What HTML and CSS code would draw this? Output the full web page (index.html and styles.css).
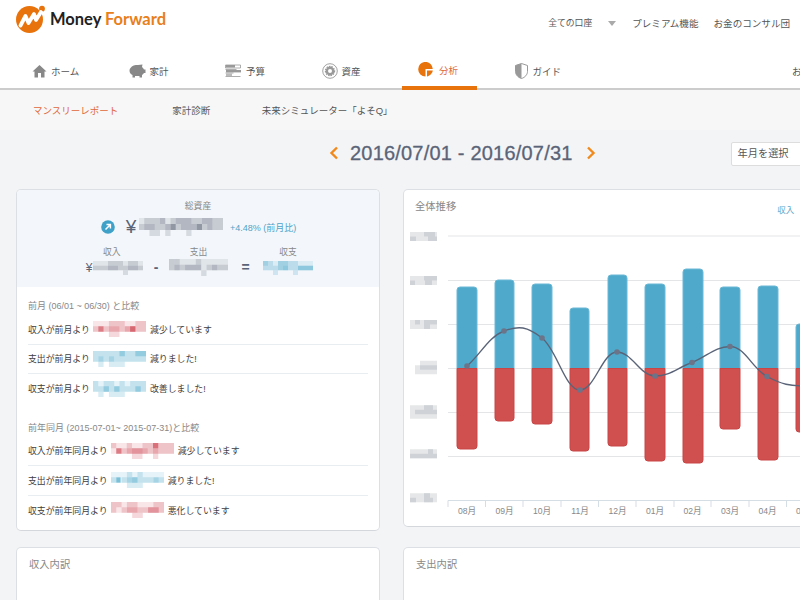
FILE: index.html
```html
<!DOCTYPE html>
<html lang="ja">
<head>
<meta charset="utf-8">
<title>Money Forward</title>
<link rel="stylesheet" href="styles.css">
</head>
<body>
<div class="page">
  <header class="top">
    <div class="logo">
      <svg class="logo-mark" width="32" height="30" viewBox="0 0 32 30">
        <circle cx="14.500" cy="15.500" r="13.500" fill="#e8730c"/>
        <circle cx="27" cy="4.700" r="2.900" fill="#e8730c"/>
        <path d="M5.500 21.500 L10.500 12 L13.500 19 L19 10 L21 16 L26 8" fill="none" stroke="#fff" stroke-width="3.800" stroke-linejoin="round" stroke-linecap="round"/>
      </svg>
      <span class="logo-text">Money <em>Forward</em></span>
    </div>
    <div class="top-links">
      <a class="account">全ての口座</a>
      <span class="tri"></span>
      <a class="premium">プレミアム機能</a>
      <a>お金のコンサル団</a>
    </div>
  </header>

  <nav class="nav">
    <a class="nav-item">
      <svg width="15" height="14" viewBox="0 0 15 14"><path d="M7.500 1 L0.500 7.500 H2.500 V13.500 H6 V9 H9 V13.500 H12.500 V7.500 H14.500 Z" fill="#888"/></svg>ホーム
    </a>
    <a class="nav-item">
      <svg width="17" height="14" viewBox="0 0 17 14"><path d="M1.500 4 C3 1.500 6 1 9 1 C10.500 1 12 .5 13.500 .5 L13 3 C14 3.800 14.600 4.600 15 5.500 H16.500 V9 H15 C14.400 10 13.600 10.700 13 11 V13.500 H10.500 V12 H6 V13.500 H3.500 V11 C1.500 10 .5 8.500 .5 6.500 C.5 5.500 .9 4.600 1.500 4 Z" fill="#888"/></svg>家計
    </a>
    <a class="nav-item">
      <svg width="17" height="14" viewBox="0 0 17 14"><path d="M.5 1h15v3H.5zM.5 5.500h11M.5 9h8M.5 12.500h15" fill="none" stroke="#999" stroke-width=".8"/><path d="M1 6h15v2.400H1z" fill="#999"/><path d="M1 9.500h6v2.500H1z" fill="#bbb"/><path d="M1 1h9v2.500H1z" fill="#999"/></svg>予算
    </a>
    <a class="nav-item">
      <svg width="16" height="16" viewBox="0 0 16 16"><circle cx="8" cy="8" r="7.300" fill="none" stroke="#999" stroke-width=".9"/><circle cx="8" cy="8" r="3.200" fill="none" stroke="#999" stroke-width="2.400"/><circle cx="8" cy="8" r="4.600" fill="none" stroke="#999" stroke-width="1.200" stroke-dasharray="1.500 1"/></svg>資産
    </a>
    <a class="nav-item active">
      <svg width="16" height="15" viewBox="0 0 16 15"><path d="M14.800 7 A7.300 7.300 0 1 0 7.500 14.500 V7 Z" fill="#e8730c"/><path d="M9 8.500 H14.800 C14.500 11 12 13.800 9 14.500 Z" fill="#e8730c"/></svg>分析
    </a>
    <a class="nav-item guide">
      <svg width="13" height="16" viewBox="0 0 13 16"><path d="M6.500 .5 L12.500 2.500 V8.500 C12.500 11.500 10 14.500 6.500 15.500 C3 14.500 .5 11.500 .5 8.500 V2.500 Z" fill="#fff" stroke="#999"/><path d="M6.500 .5 L.5 2.500 V8.500 C.5 11.500 3 14.500 6.500 15.500 Z" fill="#999"/></svg>ガイド
    </a>
    <a class="nav-item nav-clip">お知らせ</a>
  </nav>

  <div class="subnav">
    <a class="sub-active">マンスリーレポート</a>
    <a>家計診断</a>
    <a>未来シミュレーター「よそQ」</a>
  </div>

  <main class="main">
    <div class="date-row">
      <svg class="chev" width="10" height="14" viewBox="0 0 10 14"><path d="M8 1.500 L2.500 7 L8 12.500" fill="none" stroke="#f08a1d" stroke-width="2.400"/></svg>
      <h1 class="date">2016/07/01 - 2016/07/31</h1>
      <svg class="chev" width="10" height="14" viewBox="0 0 10 14"><path d="M2 1.500 L7.500 7 L2 12.500" fill="none" stroke="#f08a1d" stroke-width="2.400"/></svg>
      <div class="picker">年月を選択</div>
    </div>

    <div class="grid">
      <section class="card card-summary">
        <div class="summary">
          <div class="s-label">総資産</div>
          <div class="total">
            <svg class="arrow" width="14" height="14" viewBox="0 0 14 14"><circle cx="7" cy="7" r="6.800" fill="#3fa0c8"/><path d="M4.500 9.500 L9 5 M5.500 4.600 H9.400 V8.500" fill="none" stroke="#fff" stroke-width="1.500"/></svg>
            <span class="yen-big">¥</span>
            <svg class="mz mz-total" width="84" height="18" viewBox="0 0 16 3" preserveAspectRatio="none">
              <path class="gray m0" d="M0 .5h16M0 1.500h16"/>
              <path class="gray m1" d="M1 .5h3M6 .5h1M10 .5h2M14 .5h2M0 1.500h1M3 1.500h2M7 1.500h1M12 1.500h1M14 1.500h2"/>
              <path class="gray m2" d="M1 1.500h2M5 1.500h1M8 1.500h3M13 1.500h1M4 .5h1M7 .5h3M12 .5h2"/>
              <path class="gray m1" d="M2 2.500h2M5 2.500h1M9 2.500h1"/>
              <path class="gray m3" d="M6 1.500h1M11 1.500h1"/>
            </svg>
            <span class="rate">+4.48% (前月比)</span>
          </div>
          <div class="calc">
            <div class="s-label s-first">収入</div><div></div><div class="s-label">支出</div><div></div><div class="s-label">収支</div>
            <div class="calc-val"><span class="yen-small">¥</span>
              <svg class="mz" width="50" height="14" viewBox="0 0 10 3" preserveAspectRatio="none">
                <path class="gray m0" d="M0 .5h10M0 1.500h10"/>
                <path class="gray m1" d="M0 1.500h3M5 1.500h2M9 1.500h1M3 .5h3M7 .5h2"/>
                <path class="gray m2" d="M3 1.500h2M7 1.500h2"/>
                <path class="gray m1" d="M6 2.500h1"/>
              </svg>
            </div>
            <div class="op">-</div>
            <svg class="mz" width="59" height="17" viewBox="0 0 11 3" preserveAspectRatio="none">
              <path class="gray m0" d="M0 .5h11M0 1.500h11"/>
              <path class="gray m1" d="M0 .5h1M0 1.500h1M2 1.500h1M5 .5h1M9 1.500h2M7 1.500h1"/>
              <path class="gray m2" d="M1 1.500h1M3 1.500h3M8 1.500h1"/>
              <path class="gray m1" d="M6 2.500h1M1 .5h1"/>
            </svg>
            <div class="op">=</div>
            <svg class="mz" width="50" height="14" viewBox="0 0 10 3" preserveAspectRatio="none">
              <path class="blue m0" d="M0 .5h10M0 1.500h10"/>
              <path class="blue m1" d="M0 1.500h3M4 1.500h6M1 .5h1M5 .5h2"/>
              <path class="blue m2" d="M0 .5h1M3 1.500h2M3 .5h2M7 1.500h3"/>
              <path class="blue m1" d="M2 2.500h1M6 2.500h1"/>
            </svg>
          </div>
        </div>

        <div class="compare">
          <h3 class="c-title">前月 (06/01 ~ 06/30) と比較</h3>
          <ul class="c-list">
            <li>収入が前月より
              <svg class="mz" width="53" height="16" viewBox="0 0 10 3" preserveAspectRatio="none">
                <path class="red m0" d="M0 .5h10M0 1.500h10"/>
                <path class="red m1" d="M8 .5h2M3 .5h3M0 1.500h1M2 1.500h1M3 2.500h2M5 1.500h1M8 1.500h2"/>
                <path class="red m2" d="M3 1.500h2M6 1.500h2"/>
                <path class="red m3" d="M1 1.500h1M7 1.500h1"/>
              </svg>
              減少しています</li>
            <li>支出が前月より
              <svg class="mz" width="53" height="16" viewBox="0 0 10 3" preserveAspectRatio="none">
                <path class="blue m0" d="M0 .5h10M0 1.500h10"/>
                <path class="blue m1" d="M0 .5h10M0 1.500h1M2 1.500h1M4 1.500h2M6 1.500h4M1 2.500h1M3 2.500h3"/>
                <path class="blue m2" d="M1 1.500h1M3 1.500h1M5 .5h1M8 .5h2"/>
              </svg>
              減りました!</li>
            <li>収支が前月より
              <svg class="mz" width="53" height="16" viewBox="0 0 10 3" preserveAspectRatio="none">
                <path class="blue m0" d="M0 .5h10M0 1.500h10"/>
                <path class="blue m1" d="M0 .5h1M2 .5h2M5 .5h1M7 .5h3M0 1.500h10M1 2.500h1M3 2.500h3"/>
                <path class="blue m2" d="M2 1.500h1M4 1.500h1M8 1.500h1"/>
              </svg>
              改善しました!</li>
          </ul>

          <h3 class="c-title c-second">前年同月 (2015-07-01~ 2015-07-31)と比較</h3>
          <ul class="c-list">
            <li>収入が前年同月より
              <svg class="mz" width="63" height="16" viewBox="0 0 12 3" preserveAspectRatio="none">
                <path class="red m0" d="M0 .5h12M0 1.500h12"/>
                <path class="red m1" d="M0 .5h1M3 .5h1M6 .5h3M2 1.500h1M4 1.500h2M7 1.500h1M9 1.500h3M9 .5h3M4 2.500h2M8 2.500h1"/>
                <path class="red m2" d="M3 1.500h2M5 1.500h2M8 1.500h1"/>
                <path class="red m3" d="M1 1.500h1M8 .5h1"/>
              </svg>
              減少しています</li>
            <li>支出が前年同月より
              <svg class="mz mz-narrow" width="53" height="16" viewBox="0 0 10 3" preserveAspectRatio="none">
                <path class="blue m0" d="M0 .5h10M0 1.500h10"/>
                <path class="blue m1" d="M0 1.500h1M2 1.500h1M3 .5h1M4 1.500h4M5 .5h1M9 1.500h1M3 2.500h3"/>
                <path class="blue m2" d="M3 1.500h2M8 1.500h1"/>
                <path class="blue m3" d="M1 1.500h.8"/>
              </svg>
              減りました!</li>
            <li>収支が前年同月より
              <svg class="mz mz-narrow" width="53" height="16" viewBox="0 0 10 3" preserveAspectRatio="none">
                <path class="red m0" d="M0 .5h10M0 1.500h10"/>
                <path class="red m1" d="M0 .5h2M3 .5h2M0 1.500h1M2 1.500h1M5 1.500h1M6 1.500h4M4 2.500h2M8 .5h2"/>
                <path class="red m2" d="M3 1.500h2M7 1.500h2"/>
              </svg>
              悪化しています</li>
          </ul>
        </div>
      </section>

      <section class="card card-chart">
        <div class="chart-head">
          <h2 class="card-title">全体推移</h2>
          <span class="legend">収入</span>
        </div>
        <svg class="chart" width="397" height="296" viewBox="404 226 397 296">
          <path class="gridlines" d="M448 236H800M448 280.500H800M448 324.500H800M448 368.500H800M448 412.500H800M448 456.500H800"/>
          <g class="axis-mz">
            <path class="base" d="M410 234.200h27M410 238.700h27"/>
            <path class="cells" d="M410 238.700h6M424 234.200h11M428 238.700h9"/>
            <path class="base" d="M410 278.200h27M410 282.700h27"/>
            <path class="cells" d="M424 278.200h13M410 282.700h5M425 282.700h7"/>
            <path class="base" d="M410 322.200h27M410 326.700h27"/>
            <path class="cells" d="M415 322.200h5M424 322.200h13M424 326.700h6"/>
            <path class="base" d="M420 363h17M415 367.500h22M415 372h22"/>
            <path class="cells" d="M420 367.500h17"/>
            <path class="base" d="M410 407.500h27M410 412h27M410 416.500h27"/>
            <path class="cells" d="M424 407.500h9M415 412h22"/>
            <path class="base" d="M410 451.500h27M410 456h27"/>
            <path class="cells" d="M410 456h27M428 451.500h5"/>
            <path class="base" d="M410 495.500h27M410 500h27"/>
            <path class="cells" d="M424 495.500h6M410 500h6M424 500h9"/>
          </g>
          <g class="bars-blue">
            <path d="M457 368.500V290q0-3 3-3h14q3 0 3 3V368.500z"/>
            <path d="M495 368.500V283q0-3 3-3h13q3 0 3 3V368.500z"/>
            <path d="M532 368.500V287q0-3 3-3h14q3 0 3 3V368.500z"/>
            <path d="M570 368.500V311q0-3 3-3h13q3 0 3 3V368.500z"/>
            <path d="M608 368.500V278q0-3 3-3h13q3 0 3 3V368.500z"/>
            <path d="M645 368.500V287q0-3 3-3h14q3 0 3 3V368.500z"/>
            <path d="M683 368.500V272q0-3 3-3h14q3 0 3 3V368.500z"/>
            <path d="M720 368.500V290q0-3 3-3h14q3 0 3 3V368.500z"/>
            <path d="M758 368.500V289q0-3 3-3h14q3 0 3 3V368.500z"/>
            <path d="M796 368.500V327q0-3 3-3h14q3 0 3 3V368.500z"/>
          </g>
          <g class="bars-red">
            <path d="M457 368.500V446q0 3 3 3h14q3 0 3-3V368.500z"/>
            <path d="M495 368.500V418q0 3 3 3h13q3 0 3-3V368.500z"/>
            <path d="M532 368.500V421q0 3 3 3h14q3 0 3-3V368.500z"/>
            <path d="M570 368.500V448q0 3 3 3h13q3 0 3-3V368.500z"/>
            <path d="M608 368.500V443q0 3 3 3h13q3 0 3-3V368.500z"/>
            <path d="M645 368.500V458q0 3 3 3h14q3 0 3-3V368.500z"/>
            <path d="M683 368.500V460q0 3 3 3h14q3 0 3-3V368.500z"/>
            <path d="M720 368.500V426q0 3 3 3h14q3 0 3-3V368.500z"/>
            <path d="M758 368.500V457q0 3 3 3h14q3 0 3-3V368.500z"/>
            <path d="M796 368.500V429q0 3 3 3h14q3 0 3-3V368.500z"/>
          </g>
          <path class="trend" d="M467 366C480 355 489 336.600 504 331C519 325.400 527 326.400 542 338C557 349.600 565 390 580 390C595 390 602 352 617 352C632 352 640 376 655 376C670 376 677 368 692 362.500C707 356.600 715 346.500 730 346.500C745 346.500 752 368.500 767 376.500C782 384.500 790 386 805 386"/>
          <g class="dots">
            <circle cx="467" cy="366" r="2.800"/><circle cx="504" cy="331" r="2.800"/><circle cx="542" cy="338" r="2.800"/><circle cx="580" cy="390" r="2.800"/><circle cx="617" cy="352" r="2.800"/><circle cx="655" cy="376" r="2.800"/><circle cx="692" cy="362.500" r="2.800"/><circle cx="730" cy="346.500" r="2.800"/><circle cx="767" cy="376.500" r="2.800"/>
          </g>
          <path class="axis" d="M448 507V500.500H800M485.500 500.500V507M523 500.500V507M561 500.500V507M598.500 500.500V507M636 500.500V507M674 500.500V507M711 500.500V507M749 500.500V507M786.500 500.500V507"/>
          <g class="ticks">
            <text x="467" y="513.500">08月</text><text x="504.500" y="513.500">09月</text><text x="542" y="513.500">10月</text><text x="580" y="513.500">11月</text><text x="617.500" y="513.500">12月</text><text x="655" y="513.500">01月</text><text x="692.500" y="513.500">02月</text><text x="730" y="513.500">03月</text><text x="767.500" y="513.500">04月</text><text x="805" y="513.500">05月</text>
          </g>
        </svg>
      </section>

      <section class="card card-low"><h2 class="card-title">収入内訳</h2></section>
      <section class="card card-low"><h2 class="card-title">支出内訳</h2></section>
    </div>
  </main>
</div>
</body>
</html>
```

FILE: styles.css
```css
html, body { margin: 0; padding: 0; }
body { background: #fff; font-family: "Liberation Sans", "Noto Sans CJK JP", sans-serif; color: #444; overflow: hidden; }
a { color: inherit; text-decoration: none; }
h1, h2, h3, ul { margin: 0; padding: 0; font-weight: normal; list-style: none; }

.page { width: 800px; height: 600px; overflow: hidden; background: #f3f4f6; }

.top { height: 53px; background: #fff; display: flex; justify-content: space-between; padding: 4px 10px 0 15px; box-sizing: border-box; }
.logo { display: flex; align-items: flex-start; height: 32px; gap: 3px; }
.logo-text { font-family: Lato, sans-serif; font-weight: 700; font-size: 16.500px; color: #222; line-height: 30px; white-space: nowrap; }
.logo-text em { font-style: normal; color: #e8801c; }
.top-links { display: flex; align-items: center; height: 38px; font-size: 9.570px; color: #555; }
.account { margin-right: 16px; font-size: 8.800px; margin-top: -2px; }
.tri { width: 0; height: 0; border-left: 4.500px solid transparent; border-right: 4.500px solid transparent; border-top: 5px solid #aaa; margin-right: 16px; }
.premium { margin-right: 15px; }

.nav { height: 37px; background: #fff; border-bottom: 2px solid #ccc; box-sizing: border-box; display: flex; padding-left: 16px; white-space: nowrap; }
.nav-item { width: 75px; flex: none; margin-right: 21.500px; height: 35px; box-sizing: border-box; padding-left: 16px; display: flex; align-items: center; align-self: flex-start; gap: 4px; font-size: 9.500px; color: #555; }
.nav-item.active { color: #e0683a; border-bottom: 4px solid #e8730c; height: 37px; gap: 5px; }
.nav-item.guide { gap: 5px; }
.nav-clip { padding-left: 0; margin-left: 197px; }

.subnav { height: 40px; background: #f7f7f7; display: flex; align-items: center; padding-left: 33px; font-size: 9.500px; color: #555; white-space: nowrap; }
.subnav a { margin-right: 51.500px; }
.subnav a.sub-active { color: #e0683a; margin-right: 54px; }

.date-row { height: 59px; display: flex; align-items: center; padding: 0 0 13px 329px; box-sizing: border-box; }
.chev { flex: none; }
.date { font-size: 20px; letter-spacing: .2px; color: #5a6478; margin: 0 13px 0 11px; -webkit-text-stroke: .3px #5a6478; white-space: nowrap; flex: none; }
.picker { margin: 2px 0 0 135px; width: 90px; height: 24px; flex: none; background: #fff; border: 1px solid #ddd; border-radius: 2px; box-sizing: border-box; padding-left: 6px; line-height: 22px; font-size: 10.200px; color: #555; }

.grid { display: grid; grid-template-columns: 364px 500px; column-gap: 23px; row-gap: 16px; padding-left: 16px; grid-template-rows: 342px 100px; }
.card { background: #fff; border: 1px solid #dcdfe4; border-bottom-color: #d4d7dc; border-radius: 5px; box-sizing: border-box; overflow: hidden; }
.card-chart { height: 338px; }
.card-title { font-size: 10.300px; color: #888; line-height: 14px; }
.card-low { padding: 10px 12px; }

.mz { flex: none; display: inline-block; vertical-align: middle; fill: none; filter: blur(.5px); stroke-width: 1; }
.gray { stroke: #6f7686; }
.blue { stroke: #4fa9cb; }
.red { stroke: #d04f5a; }
.m0 { stroke-opacity: .14; }
.m1 { stroke-opacity: .22; }
.m2 { stroke-opacity: .42; }
.m3 { stroke-opacity: .7; }

.summary { background: #f3f7fb; height: 97px; text-align: center; padding-top: 10px; box-sizing: border-box; }
.s-label { font-size: 8.800px; color: #888; line-height: 13px; text-align: center; }
.s-first { text-align: left; padding-left: 18px; }
.total { display: flex; align-items: center; height: 28px; padding-left: 84px; margin-top: 1px; }
.arrow { margin-right: 9px; margin-top: -2px; }
.yen-big { font-size: 19px; color: #5a6478; width: 14px; margin-right: 1px; line-height: 20px; margin-top: -3px; }
.mz-total { margin-top: -2px; }
.rate { font-size: 9px; color: #4fa3c7; margin-left: 7px; margin-top: -2px; white-space: nowrap; }
.calc { display: grid; grid-template-columns: 58px 26px 59px 35px 50px; align-items: center; margin: 4px 0 0 68px; }
.calc-val { display: flex; align-items: center; }
.yen-small { font-size: 12px; color: #5a6478; width: 8px; }
.op { font-size: 14px; color: #5a6478; text-align: center; font-weight: 700; margin-top: -2px; }

.compare { padding: 13px 11px 0; }
.c-title { font-size: 9px; color: #888; line-height: 13px; }
.c-second { margin-top: 18px; }
.c-list { margin-top: 2px; }
.c-list li { height: 29.500px; box-sizing: border-box; border-bottom: 1px solid #e8edf1; font-size: 8.900px; color: #403d3d; display: flex; align-items: center; gap: 3.500px; white-space: nowrap; }
.c-list li:last-child { border-bottom: 0; }

.chart-head { display: flex; align-items: center; padding: 9px 0 0 11px; height: 24px; box-sizing: border-box; }
.legend { font-size: 8.500px; color: #5ba8cb; margin-left: 321px; margin-top: 4px; white-space: nowrap; }
.chart { display: block; margin-top: 12px; }
.gridlines { stroke: #e4e5e7; stroke-width: 1; fill: none; }
.axis-mz { filter: blur(.5px); }
.axis-mz path { stroke-width: 4.500; fill: none; }
.axis-mz .base { stroke: #e6e7e8; }
.axis-mz .cells { stroke: #cfd3d8; }
.bars-blue path { fill: #4fa9cb; stroke: #6cb9d6; stroke-width: 1; }
.bars-red path { fill: #d04f4f; stroke: #c94646; stroke-width: 1; }
.trend { fill: none; stroke: #5a6478; stroke-width: 1.400; }
.dots circle { fill: #6b7488; }
.axis { fill: none; stroke: #d5dde5; stroke-width: 1; }
.ticks text { font-size: 8.600px; fill: #888; text-anchor: middle; }
```
